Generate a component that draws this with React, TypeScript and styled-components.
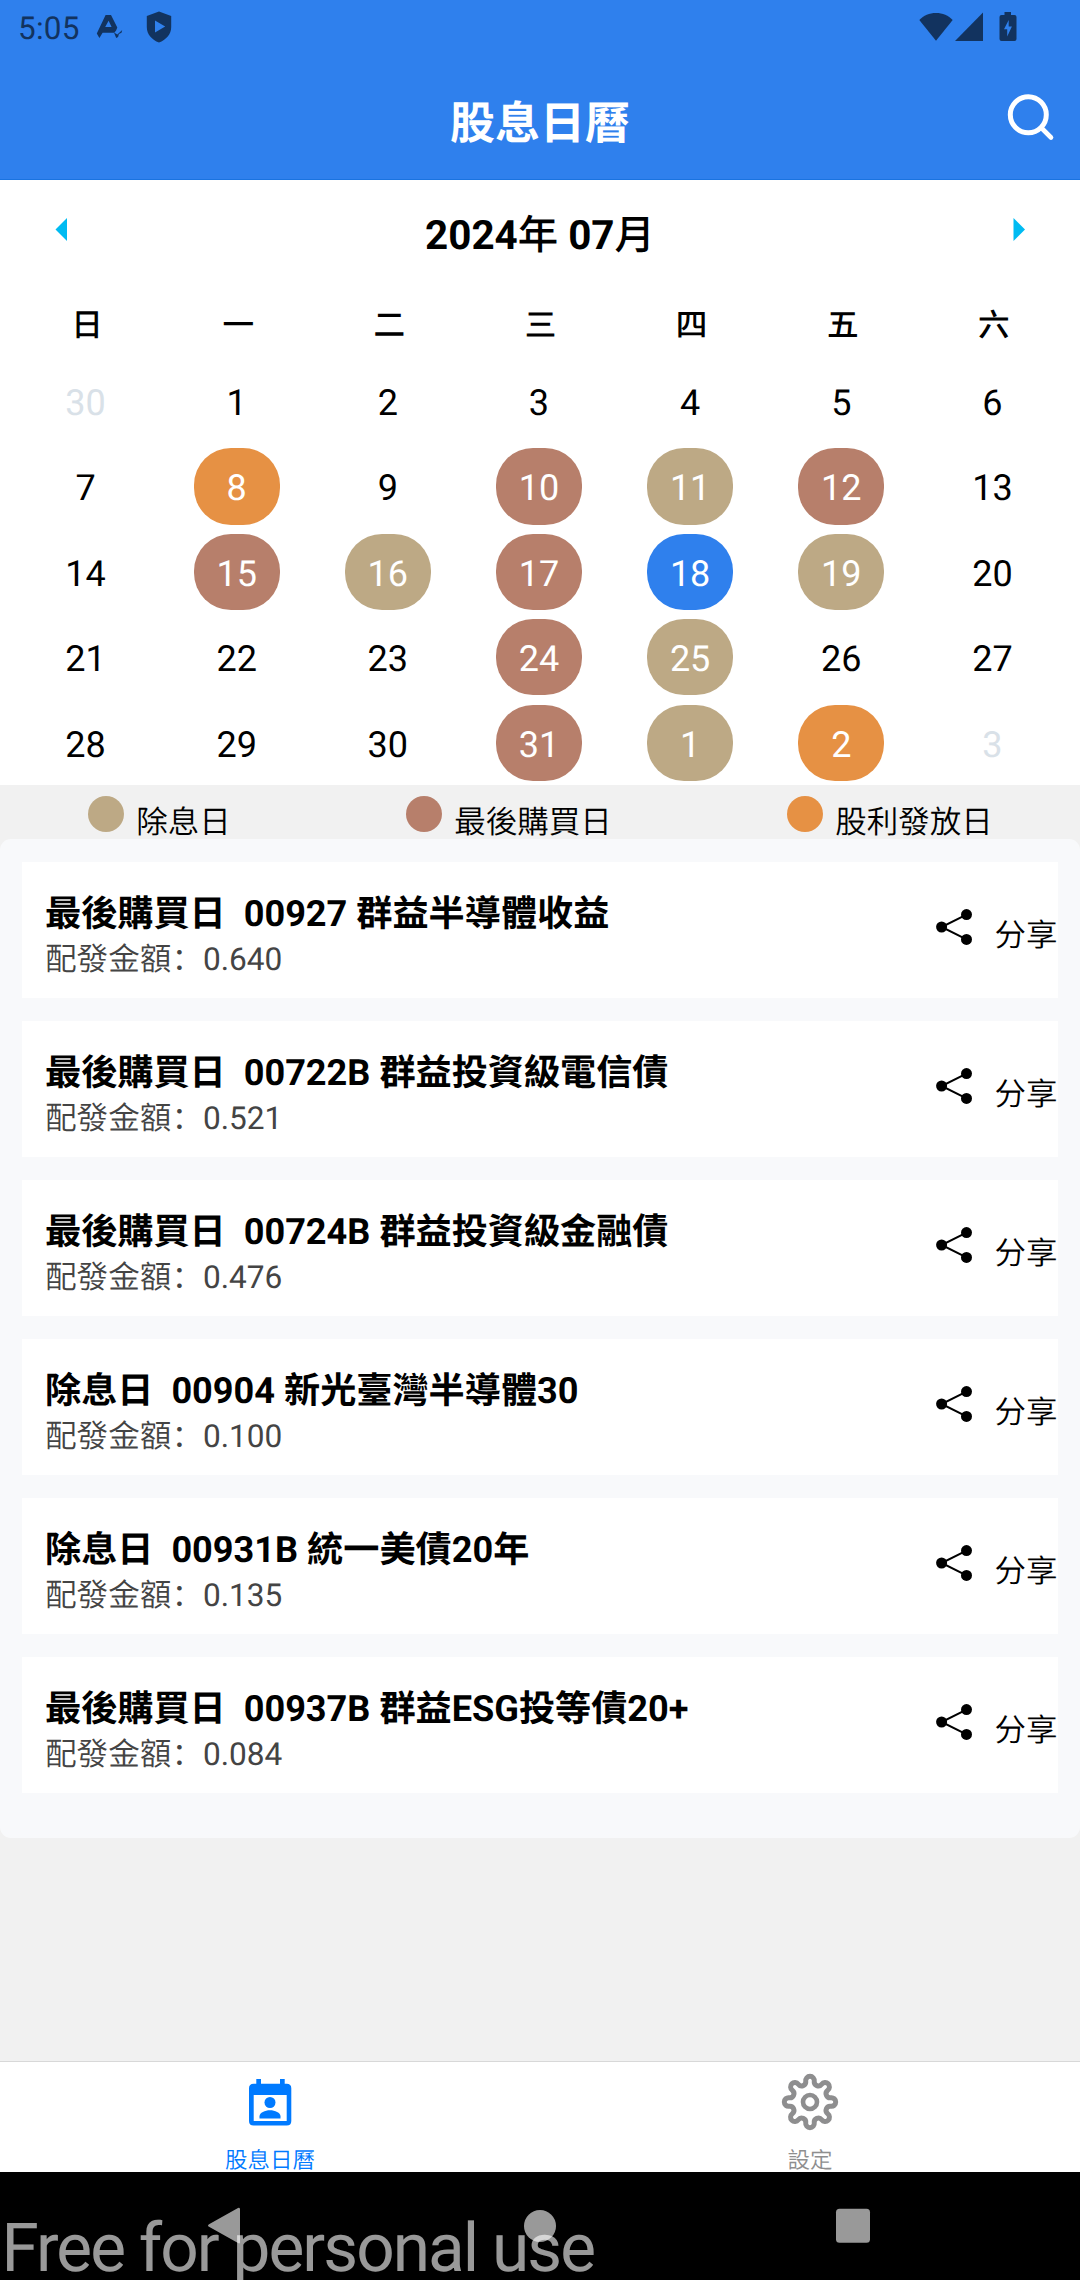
import React from "react";
import styled, { createGlobalStyle } from "styled-components";

const GlobalStyle = createGlobalStyle`
  html, body { margin: 0; padding: 0; background: #000; }
  * { box-sizing: border-box; }
  body {
    font-family: Roboto, "Noto Sans CJK SC", sans-serif;
    font-weight: 400;
    color: #000;
    text-rendering: geometricPrecision;
  }
`;

const INK = "#12335f";
const LAST_BUY = "#b77f6b";
const EX_DIV = "#bda985";
const PAYOUT = "#e69144";
const TODAY = "#2f80ed";

const Screen = styled.div`
  width: 1080px;
  height: 2280px;
  display: flex;
  flex-direction: column;
  background: #f1f1f1;
  overflow: hidden;
`;

const Top = styled.header`
  height: 180px;
  background: #2f80ed;
  border-bottom: 1px solid #1a73e0;
  display: flex;
  flex-direction: column;
`;

const StatusBar = styled.div`
  height: 56px;
  display: flex;
  align-items: flex-start;
  padding: 0 63px 0 18px;
`;

const Clock = styled.span`
  font-size: 31.5px;
  line-height: 37px;
  margin-top: 10px;
  width: 70px;
  letter-spacing: 0.2px;
  color: ${INK};
`;

const StatusIcon = styled.svg<{ $ml: number; $mt: number }>`
  flex: none;
  display: block;
  fill: ${INK};
  margin-left: ${(p) => p.$ml}px;
  margin-top: ${(p) => p.$mt}px;
`;

const Spacer = styled.div`
  flex: 1;
`;

const TitleBar = styled.div`
  flex: 1;
  display: grid;
  grid-template-columns: 100px 1fr 100px;
`;

const AppTitle = styled.h1`
  grid-column: 2;
  margin: 35px 0 0;
  font-size: 45px;
  line-height: 66px;
  font-weight: 700;
  text-align: center;
  color: #fff;
`;

const SearchIcon = styled.svg`
  margin: 34px 0 0 24px;
  width: 52px;
  height: 52px;
  fill: none;
  stroke: #fff;
  stroke-linecap: round;
`;

const Calendar = styled.section`
  height: 605px;
  background: #fff;
  flex: none;
`;

const MonthRow = styled.div`
  height: 114px;
  display: flex;
  justify-content: space-between;
  padding: 0 55px;
`;

const Arrow = styled.svg`
  width: 12px;
  height: 23px;
  margin-top: 38px;
  fill: #00bbf2;
`;

const Month = styled.h2`
  margin: 31px 0 0;
  font-size: 40.4px;
  line-height: 50px;
  font-weight: 700;
`;

/* CJK glyphs here are one step lighter than the numerals beside them */
const Unit = styled.span`
  font-weight: 500;
`;

const Weekdays = styled.div`
  display: grid;
  grid-template-columns: repeat(7, 1fr);
  padding: 0 10.5px 0 11.5px;
  height: 69px;
`;

const Weekday = styled.span`
  font-size: 31.6px;
  line-height: 46px;
  margin-top: 8.5px;
  font-weight: 500;
  text-align: center;
`;

const Days = styled.div`
  display: grid;
  grid-template-columns: repeat(7, 1fr);
  grid-auto-rows: 85.4px;
  padding: 0 12px 0 10px;
  justify-items: center;
`;

const Day = styled.div<{ $bg?: string; $muted?: boolean }>`
  width: 86px;
  height: 76.2px;
  border-radius: 37px;
  background: ${(p) => p.$bg ?? "transparent"};
  color: ${(p) => (p.$bg ? "#fff" : p.$muted ? "#d9e1e8" : "#000")};
  font-size: 36px;
  line-height: 81.4px;
  text-align: center;
`;

const Legend = styled.div`
  height: 54px;
  flex: none;
  display: flex;
  justify-content: space-around;
`;

const LegendItem = styled.div`
  display: flex;
  gap: 12px;
  font-size: 31.5px;
  font-weight: 350;
  line-height: 46px;
`;

const Dot = styled.i<{ $bg: string }>`
  width: 36px;
  height: 36px;
  border-radius: 50%;
  margin-top: 11px;
  margin-left: 1px;
  background: ${(p) => p.$bg};
`;

const LegendText = styled.span`
  margin-top: 15px;
  height: 39px;
`;

const Panel = styled.main`
  background: #f8f9fb;
  border-radius: 11px;
  height: 999px;
  flex: none;
  padding: 22.5px 22.5px 22.5px 22px;
  display: flex;
  flex-direction: column;
  gap: 22.5px;
`;

const Card = styled.article`
  height: 136.5px;
  flex: none;
  background: #fff;
  display: flex;
  justify-content: space-between;
  padding-left: 23px;
`;

const CardBody = styled.div`
  padding-top: 25px;
`;

const CardTitle = styled.h3`
  margin: 0;
  font-size: 36.15px;
  line-height: 53px;
  font-weight: 700;
  white-space: pre;
`;

const Amount = styled.p`
  margin: -3px 0 0;
  font-size: 31.6px;
  line-height: 46px;
  color: #444;
`;

const AmountLabel = styled.span`
  font-weight: 350;
`;

const Share = styled.div`
  display: flex;
  font-size: 31.5px;
  font-weight: 350;
  line-height: 46px;
`;

const ShareIcon = styled.svg`
  width: 36px;
  height: 36px;
  margin: 47px 22.5px 0 0;
`;

const ShareText = styled.span`
  margin-top: 51px;
`;

const Blank = styled.div`
  flex: 1;
`;

const Tabs = styled.nav`
  height: 111px;
  flex: none;
  background: #fff;
  border-top: 1px solid #d8d8d8;
  display: grid;
  grid-template-columns: 1fr 1fr;
  overflow: hidden;
`;

const Tab = styled.div<{ $active?: boolean }>`
  display: flex;
  flex-direction: column;
  align-items: center;
  color: ${(p) => (p.$active ? "#007aff" : "#8e8e8f")};
  font-size: 22.5px;
  font-weight: 350;
  line-height: 30px;
`;

const TabIcon = styled.svg`
  width: 58px;
  height: 58px;
  margin: 11px 0;
  flex: none;
`;

const TabLabel = styled.span`
  margin-top: 3.5px;
  height: 26px;
`;

const NavBar = styled.footer`
  height: 108px;
  flex: none;
  background: #000;
  position: relative;
  display: flex;
  align-items: flex-start;
  padding-top: 35px;
`;

const NavIcon = styled.svg<{ $ml: number }>`
  width: 36px;
  height: 37px;
  fill: #999;
  margin-left: ${(p) => p.$ml}px;
`;

const Watermark = styled.div`
  position: absolute;
  left: 1.5px;
  top: 46px;
  font-size: 67.5px;
  line-height: 62px;
  letter-spacing: -1.95px;
  white-space: nowrap;
  color: rgba(255, 255, 255, 0.6);
`;

/** Eight-lobed cog outline: tangent convex and concave arcs around the centre. */
function cogPath(cx: number, cy: number) {
  const outer = 21.4;
  const inner = 21.9;
  const rc = 4.3;
  const pts: [number, number][] = [];
  const at = (r: number, deg: number): [number, number] => [
    cx + r * Math.sin((deg * Math.PI) / 180),
    cy - r * Math.cos((deg * Math.PI) / 180),
  ];
  let rv = 4.1;
  for (let i = 0; i < 8; i++) {
    const cap = at(outer, i * 45);
    for (const side of [-22.5, 22.5]) {
      const valley = at(inner, i * 45 + side);
      const d = Math.hypot(valley[0] - cap[0], valley[1] - cap[1]);
      rv = d - rc;
      pts.push([
        cap[0] + ((valley[0] - cap[0]) * rc) / d,
        cap[1] + ((valley[1] - cap[1]) * rc) / d,
      ]);
    }
  }
  let path = `M${pts[0].join(" ")}`;
  for (let i = 1; i <= 16; i++) {
    const p = pts[i % 16];
    path += i % 2 ? `A${rc} ${rc} 0 1 1 ${p.join(" ")}` : `A${rv} ${rv} 0 0 0 ${p.join(" ")}`;
  }
  return path + "Z";
}

const weekdays = ["日", "一", "二", "三", "四", "五", "六"];

const marks: Record<number, string> = {
  8: PAYOUT, 10: LAST_BUY, 11: EX_DIV, 12: LAST_BUY, 15: LAST_BUY, 16: EX_DIV,
  17: LAST_BUY, 18: TODAY, 19: EX_DIV, 24: LAST_BUY, 25: EX_DIV, 31: LAST_BUY,
  32: EX_DIV, 33: PAYOUT,
};

const days = Array.from({ length: 35 }, (_, i) => ({
  label: i === 0 ? 30 : i > 31 ? i - 31 : i,
  bg: marks[i],
  muted: i === 0 || i > 31,
}));

const legend = [
  { text: "除息日", color: EX_DIV },
  { text: "最後購買日", color: LAST_BUY },
  { text: "股利發放日", color: PAYOUT },
];

const events = [
  { title: "最後購買日  00927 群益半導體收益", amount: "0.640" },
  { title: "最後購買日  00722B 群益投資級電信債", amount: "0.521" },
  { title: "最後購買日  00724B 群益投資級金融債", amount: "0.476" },
  { title: "除息日  00904 新光臺灣半導體30", amount: "0.100" },
  { title: "除息日  00931B 統一美債20年", amount: "0.135" },
  { title: "最後購買日  00937B 群益ESG投等債20+", amount: "0.084" },
];

export default function App() {
  return (
    <Screen>
      <GlobalStyle />
      <Top>
        <StatusBar>
          <Clock>5:05</Clock>
          <StatusIcon $ml={8} $mt={14} width="28" height="26" viewBox="0 0 28 26">
            <path
              fillRule="evenodd"
              d="M9.6 1H15l6.3 12.6-1.2 3-1.8 2.1H6.6L3.4 24 .8 19.6zM12.6 6.8 9.2 13h6.4z"
            />
            <path d="m18 18.5 3.4 2 4.8-4.6-.7 2.9-2.6 1.3-.8 2.9-1.9 1z" />
          </StatusIcon>
          <StatusIcon $ml={22} $mt={11} width="26" height="32" viewBox="0 0 26 32">
            <path
              fillRule="evenodd"
              d="M13 .5 25.2 5v11c0 7.4-5.1 12.7-12.2 15.6C5.9 28.7.8 23.4.8 16V5zM9 9.6v11.8L19.2 15.5z"
            />
          </StatusIcon>
          <Spacer />
          <StatusIcon $ml={0} $mt={12} width="34" height="29" viewBox="0 0 34 29">
            <path d="M17 28.8.3 8C4.5 3.5 10.4 1 17 1s12.500 2.500 16.700 7z" />
          </StatusIcon>
          <StatusIcon $ml={2} $mt={12} width="29" height="29" viewBox="0 0 29 29">
            <path d="M28 .5V29H0z" />
          </StatusIcon>
          <StatusIcon $ml={15} $mt={12} width="18" height="29" viewBox="0 0 18 29">
            <path
              fillRule="evenodd"
              d="M5.5 0H12v3h3.500q2 0 2 2V27q0 2-2 2H2.500q-2 0-2-2V5q0-2 2-2h3zM9.700 8 5 17.300h3.200V24.500L12.900 14.500H9.700z"
            />
          </StatusIcon>
        </StatusBar>
        <TitleBar>
          <AppTitle>股息日曆</AppTitle>
          <SearchIcon viewBox="0 0 52 52">
            <circle cx="24.3" cy="24.7" r="18" strokeWidth="5" />
            <path d="M38 38.5 47 47.5" strokeWidth="4.6" />
          </SearchIcon>
        </TitleBar>
      </Top>

      <Calendar>
        <MonthRow>
          <Arrow viewBox="0 0 12 23"><path d="M12 0v23L.5 11.500z" /></Arrow>
          <Month>2024<Unit>年</Unit> 07<Unit>月</Unit></Month>
          <Arrow viewBox="0 0 12 23"><path d="M.5 0v23L12 11.500z" /></Arrow>
        </MonthRow>
        <Weekdays>
          {weekdays.map((d) => <Weekday key={d}>{d}</Weekday>)}
        </Weekdays>
        <Days>
          {days.map((d, i) => (
            <Day key={i} $bg={d.bg} $muted={d.muted}>{d.label}</Day>
          ))}
        </Days>
      </Calendar>

      <Legend>
        {legend.map((l) => (
          <LegendItem key={l.text}>
            <Dot $bg={l.color} />
            <LegendText>{l.text}</LegendText>
          </LegendItem>
        ))}
      </Legend>

      <Panel>
        {events.map((e) => (
          <Card key={e.title}>
            <CardBody>
              <CardTitle>{e.title}</CardTitle>
              <Amount><AmountLabel>配發金額：</AmountLabel>{e.amount}</Amount>
            </CardBody>
            <Share>
              <ShareIcon viewBox="0 0 36 36">
                <path d="M30.5 5.6 5.6 18 30.5 30.4" fill="none" stroke="#000" strokeWidth="2" />
                <circle cx="30.5" cy="5.6" r="5.5" />
                <circle cx="5.6" cy="18" r="5.5" />
                <circle cx="30.5" cy="30.4" r="5.5" />
              </ShareIcon>
              <ShareText>分享</ShareText>
            </Share>
          </Card>
        ))}
      </Panel>

      <Blank />

      <Tabs>
        <Tab $active>
          <TabIcon viewBox="0 0 58 58">
            <path
              fill="currentColor"
              fillRule="evenodd"
              d="M15.300 6h4.700v4.700h19V6h4.700v4.700h2q4.600 0 4.600 4.600V48q0 4.600-4.600 4.600H12.600Q8 52.600 8 48V15.300q0-4.600 4.600-4.600h2.700zM12.700 22v26h33V22z"
            />
            <circle cx="29" cy="29.5" r="5.5" fill="currentColor" />
            <path fill="currentColor" d="M18.5 45.5v-2.300c0-3.600 5.500-6 10.500-6s10.500 2.400 10.500 6v2.300z" />
          </TabIcon>
          <TabLabel>股息日曆</TabLabel>
        </Tab>
        <Tab>
          <TabIcon viewBox="0 0 58 58">
            <path d={cogPath(29, 29)} fill="none" stroke="currentColor" strokeWidth="5" />
            <circle cx="29" cy="29" r="7" fill="none" stroke="currentColor" strokeWidth="4.6" />
          </TabIcon>
          <TabLabel>設定</TabLabel>
        </Tab>
      </Tabs>

      <NavBar>
        <NavIcon $ml={206} viewBox="0 0 36 37">
          <path d="M34 2v33.500q-.4 1.500-2 .5L3 19.800q-2-1.300 0-2.600L32 1q1.600-1 2 1z" />
        </NavIcon>
        <NavIcon $ml={280} viewBox="0 0 36 37"><circle cx="18" cy="19" r="16" /></NavIcon>
        <NavIcon $ml={277} viewBox="0 0 36 37">
          <rect x="1" y="1.8" width="34" height="34" rx="3.5" />
        </NavIcon>
        <Watermark>Free for personal use</Watermark>
      </NavBar>
    </Screen>
  );
}
